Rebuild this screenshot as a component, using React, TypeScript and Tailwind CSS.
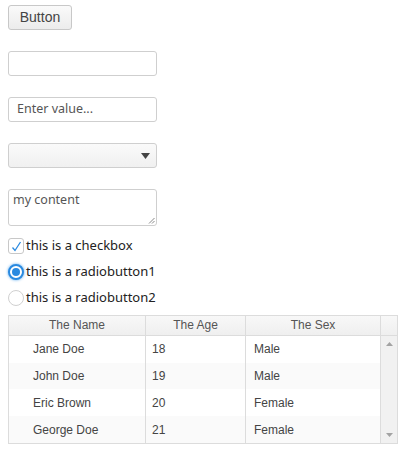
import { useState } from 'react';

const people = [
  { name: 'Jane Doe', age: 18, sex: 'Male' },
  { name: 'John Doe', age: 19, sex: 'Male' },
  { name: 'Eric Brown', age: 20, sex: 'Female' },
  { name: 'George Doe', age: 21, sex: 'Female' },
];

const uiFont = "font-['Microsoft_YaHei','Noto_Sans',sans-serif]";

export default function App() {
  const [checked, setChecked] = useState(true);
  const [radio, setRadio] = useState(1);

  return (
    <div className="w-[406px] h-[460px] bg-white pl-2 pt-[5px] text-[#333]">
      <button className="block h-[25px] w-16 rounded-[3px] border border-[#c8c8c8] bg-gradient-to-b from-[#fafafa] to-[#ececec] font-['Liberation_Sans',Arial,sans-serif] text-[14px] text-[#444]">
        Button
      </button>

      <div className="mt-[21px] h-[25px] w-[149px] rounded-[3px] border border-[#cfcfcf] bg-white" />

      <div className={`mt-[21px] flex h-[25px] w-[149px] items-center rounded-[3px] border border-[#cfcfcf] bg-white px-2 text-[12.5px] text-[#555] ${uiFont}`}>
        Enter value...
      </div>

      <div className="mt-[21px] flex h-[25px] w-[149px] items-center justify-end rounded-[3px] border border-[#cfcfcf] bg-gradient-to-b from-[#fafafa] to-[#f0f0f0] pr-[6px]">
        <svg width="9" height="6" viewBox="0 0 9 6">
          <path d="M0 0h9L4.5 6z" fill="#444" />
        </svg>
      </div>

      <div className={`relative mt-[21px] h-[37px] w-[149px] rounded-[3px] border border-[#cfcfcf] bg-white px-1 pt-[2px] text-[12.5px] leading-[16px] text-[#555] ${uiFont}`}>
        my content
        <svg className="absolute bottom-[1px] right-[1px]" width="7" height="7" viewBox="0 0 7 7">
          <path d="M6.5 1L1 6.5M6.5 4L4 6.5" stroke="#888" strokeWidth="1" />
        </svg>
      </div>

      <div className={`mt-[11px] flex flex-col text-[13px] text-[#222] ${uiFont}`}>
        <label className="flex h-[18px] items-center" onClick={() => setChecked(!checked)}>
          <span className="flex h-4 w-4 items-center justify-center rounded-[3px] border border-[#c8c8c8] bg-white">
            {checked && (
              <svg width="11" height="11" viewBox="0 0 11 11">
                <path d="M1.5 6.5L4 9.5L9.5 1" fill="none" stroke="#2a8ae0" strokeWidth="1.3" />
              </svg>
            )}
          </span>
          <span className="ml-[2px]">this is a checkbox</span>
        </label>

        {[1, 2].map((n) => (
          <label key={n} className="mt-2 flex h-[18px] items-center" onClick={() => setRadio(n)}>
            {radio === n ? (
              <span className="flex h-4 w-4 items-center justify-center rounded-full border-2 border-[#2a8ae0] bg-white shadow-[0_0_3px_#58a8ee]">
                <span className="h-[8px] w-[8px] rounded-full bg-[#2a8ae0]" />
              </span>
            ) : (
              <span className="h-4 w-4 rounded-full border border-[#d0d0d0] bg-white" />
            )}
            <span className="ml-[2px]">this is a radiobutton{n}</span>
          </label>
        ))}
      </div>

      <div className="mt-[8px] flex h-[129px] w-[390px] border border-[#dcdcdc] font-['Liberation_Sans',Arial,sans-serif] text-[12px] text-[#444]">
        <div className="flex flex-1 flex-col">
          <div className="flex h-5 border-b border-[#dcdcdc] bg-gradient-to-b from-[#f8f8f8] to-[#efefef] text-[#555]">
            <div className="flex w-[137px] items-center justify-center border-r border-[#dcdcdc]">The Name</div>
            <div className="flex w-[100px] items-center justify-center border-r border-[#dcdcdc]">The Age</div>
            <div className="flex flex-1 items-center justify-center">The Sex</div>
          </div>
          {people.map((p, i) => (
            <div key={p.name} className={`flex h-[27px] ${i % 2 ? 'bg-[#fafafa]' : 'bg-white'}`}>
              <div className="flex w-[137px] items-center border-r border-[#dcdcdc] pl-6">{p.name}</div>
              <div className="flex w-[100px] items-center border-r border-[#dcdcdc] pl-[6px]">{p.age}</div>
              <div className="flex flex-1 items-center pl-[8px]">{p.sex}</div>
            </div>
          ))}
        </div>
        <div className="flex w-[17px] flex-col border-l border-[#dcdcdc]">
          <div className="h-5 border-b border-[#dcdcdc] bg-gradient-to-b from-[#f8f8f8] to-[#efefef]" />
          <div className="flex flex-1 flex-col items-center justify-between bg-[#f1f1f1] py-[6px]">
            <svg width="7" height="4" viewBox="0 0 7 4">
              <path d="M0 4h7L3.5 0z" fill="#a3a3a3" />
            </svg>
            <svg width="7" height="4" viewBox="0 0 7 4">
              <path d="M0 0h7L3.5 4z" fill="#a3a3a3" />
            </svg>
          </div>
        </div>
      </div>
    </div>
  );
}
